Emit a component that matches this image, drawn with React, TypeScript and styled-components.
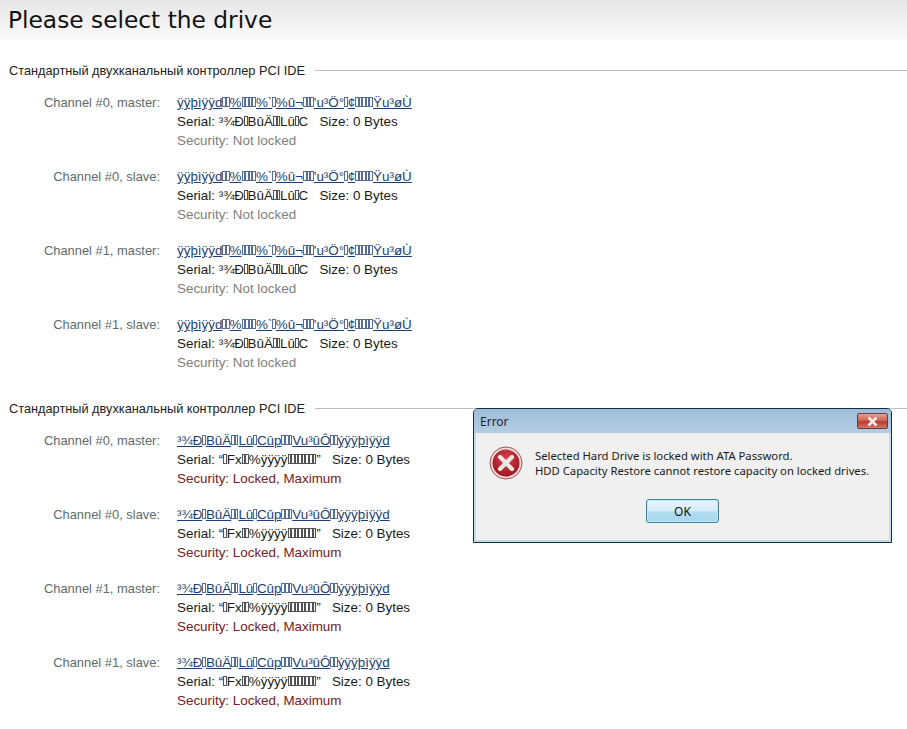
import React from 'react'
import styled, { createGlobalStyle } from 'styled-components'

const GlobalStyle = createGlobalStyle`
    html, body {
        margin: 0;
        padding: 0;
        background: #fff;
    }
    body {
        font-family: 'Liberation Sans', Arial, sans-serif;
    }
`

const Page = styled.div`
    position: relative;
    width: 907px;
    height: 729px;
    overflow: hidden;
`

const Header = styled.header`
    height: 40px;
    padding-left: 8px;
    background: linear-gradient(#e6e6e6, #fbfbfb);
`

const Title = styled.h1`
    margin: 0;
    font-family: 'DejaVu Sans', Verdana, sans-serif;
    font-size: 23.3px;
    font-weight: 400;
    line-height: 40px;
    color: #111;
`

const Controllers = styled.main`
    display: flex;
    flex-direction: column;
    gap: 28px;
    padding-top: 22px;
`

const Section = styled.section`
    display: flex;
    flex-direction: column;
    gap: 15px;
`

const SectionHead = styled.div`
    display: flex;
    align-items: center;
    gap: 10px;
    height: 16px;
    padding-left: 9px;
    &::after {
        content: '';
        flex: 1;
        height: 1px;
        background: #bdbdbd;
    }
`

const SectionName = styled.h2`
    margin: 0;
    font-size: 12.75px;
    font-weight: 400;
    color: #222;
`

const Drives = styled.div`
    display: flex;
    flex-direction: column;
    gap: 17px;
`

const Drive = styled.div`
    display: grid;
    grid-template-columns: 160px 1fr;
    column-gap: 17px;
    font-size: 13.4px;
    line-height: 19px;
`

const Channel = styled.div`
    text-align: right;
    font-size: 12.9px;
    color: #5c6c6c;
`

const Info = styled.div`
    display: flex;
    flex-direction: column;
`

const DriveLink = styled.a`
    color: #1c3f78;
    text-decoration: underline;
    cursor: pointer;
`

const Serial = styled.div`
    color: #1a1a1a;
    white-space: pre;
`

const Security = styled.div<{ $locked?: boolean }>`
    color: ${(p) => (p.$locked ? '#752027' : '#808080')};
`

const Tofu = styled.span`
    display: inline-block;
    box-sizing: border-box;
    width: 3.6px;
    height: 10px;
    border: 1px solid currentColor;
    opacity: 0.75;
`

const Dialog = styled.div`
    position: absolute;
    left: 473px;
    top: 408px;
    box-sizing: border-box;
    width: 419px;
    height: 135px;
    display: flex;
    flex-direction: column;
    border: 1px solid #14303f;
    border-radius: 5px 5px 0 0;
    background: #c4d9ea;
`

const DialogBar = styled.div`
    height: 24px;
    flex: none;
    display: flex;
    align-items: center;
    justify-content: space-between;
    padding: 0 3px 0 6px;
    border-radius: 4px 4px 0 0;
    background: linear-gradient(#9fbcd8, #b4cde3);
`

const DialogTitle = styled.span`
    font-family: 'Noto Sans', Tahoma, sans-serif;
    font-size: 12px;
    color: #1c2630;
`

const CloseButton = styled.button`
    width: 31px;
    height: 16px;
    padding: 0;
    display: flex;
    align-items: center;
    justify-content: center;
    border: 1px solid #6d3a3a;
    border-radius: 2px;
    background: linear-gradient(#e2a096, #cf5f50 48%, #b93a2c 55%, #d0796c);
`

const DialogBody = styled.div`
    flex: 1;
    margin: 0 2px 2px;
    display: flex;
    flex-direction: column;
    align-items: center;
    background: #f0f0f0;
`

const Message = styled.div`
    align-self: stretch;
    display: flex;
    align-items: center;
    gap: 12px;
    padding: 13px 0 0 13px;
`

const MessageText = styled.p`
    margin: 0;
    font-family: 'Noto Sans', Tahoma, sans-serif;
    font-size: 11.27px;
    line-height: 15px;
    color: #1a1a1a;
`

const OkButton = styled.button`
    width: 73px;
    height: 24px;
    margin-top: 19px;
    padding: 0;
    border: 1px solid #3f8196;
    border-radius: 3px;
    box-shadow: inset 0 0 0 1px #bfeafa;
    background: linear-gradient(#eaf6fc, #d5ecf8 48%, #b3def3 55%, #a6d6ee);
    font-family: 'Noto Sans', Tahoma, sans-serif;
    font-size: 12px;
    color: #111;
`

const box = '\u25AF'

// the drive strings are garbage bytes, the unprintable ones show up as little boxes
const Garbled = ({ text }: { text: string }) => (
    <>
        {text.split(box).map((part, index) => (
            <React.Fragment key={index}>
                {index > 0 && <Tofu />}
                {part}
            </React.Fragment>
        ))}
    </>
)

const firstModel = `ÿÿþìÿÿd${box}${box}%${box}${box}${box}${box}%\`${box}%û¬${box}${box}${box}'u³Ö°${box}¢${box}${box}${box}${box}${box}Ÿu³øÙ`
const firstSerial = `³¾Ð${box}BûÄ${box}${box}Lû${box}C`
const secondModel = `³¾Ð${box}BûÄ${box}${box}Lû${box}Cûp${box}${box}${box}Vu³ûÔ${box}${box}ýÿÿþìÿÿd`
const secondSerial = `“${box}Fx${box}${box}%ÿÿÿÿ${box}${box}${box}${box}${box}${box}${box}${box}”`

const channels = ['Channel #0, master:', 'Channel #0, slave:', 'Channel #1, master:', 'Channel #1, slave:']

const controllers = [
    { model: firstModel, serial: firstSerial, security: 'Security: Not locked', locked: false },
    { model: secondModel, serial: secondSerial, security: 'Security: Locked, Maximum', locked: true },
]

const ErrorIcon = () => (
    <svg width="34" height="34" viewBox="0 0 34 34">
        <defs>
            <radialGradient id="errorFill" cx="50%" cy="35%" r="70%">
                <stop offset="0%" stopColor="#d8414a" />
                <stop offset="100%" stopColor="#96121c" />
            </radialGradient>
        </defs>
        <circle cx="17" cy="17" r="16" fill="#f3dcdc" stroke="#a84b50" strokeWidth="1" />
        <circle cx="17" cy="17" r="13.5" fill="url(#errorFill)" />
        <path d="M11 11 L23 23 M23 11 L11 23" stroke="#ece6e6" strokeWidth="4.2" strokeLinecap="round" />
    </svg>
)

const App = () => (
    <Page>
        <GlobalStyle />
        <Header>
            <Title>Please select the drive</Title>
        </Header>
        <Controllers>
            {controllers.map((controller, index) => (
                <Section key={index}>
                    <SectionHead>
                        <SectionName>Стандартный двухканальный контроллер PCI IDE</SectionName>
                    </SectionHead>
                    <Drives>
                        {channels.map((channel) => (
                            <Drive key={channel}>
                                <Channel>{channel}</Channel>
                                <Info>
                                    <div>
                                        <DriveLink>
                                            <Garbled text={controller.model} />
                                        </DriveLink>
                                    </div>
                                    <Serial>
                                        Serial: <Garbled text={controller.serial} />
                                        {'   Size: 0 Bytes'}
                                    </Serial>
                                    <Security $locked={controller.locked}>{controller.security}</Security>
                                </Info>
                            </Drive>
                        ))}
                    </Drives>
                </Section>
            ))}
        </Controllers>
        <Dialog>
            <DialogBar>
                <DialogTitle>Error</DialogTitle>
                <CloseButton>
                    <svg width="13" height="11" viewBox="0 0 13 11">
                        <path d="M2.5 1.5 L10.5 9.5 M10.5 1.5 L2.5 9.5" stroke="#f4eeee" strokeWidth="2.6" />
                    </svg>
                </CloseButton>
            </DialogBar>
            <DialogBody>
                <Message>
                    <ErrorIcon />
                    <MessageText>
                        Selected Hard Drive is locked with ATA Password.
                        <br />
                        HDD Capacity Restore cannot restore capacity on locked drives.
                    </MessageText>
                </Message>
                <OkButton>OK</OkButton>
            </DialogBody>
        </Dialog>
    </Page>
)

export default App
